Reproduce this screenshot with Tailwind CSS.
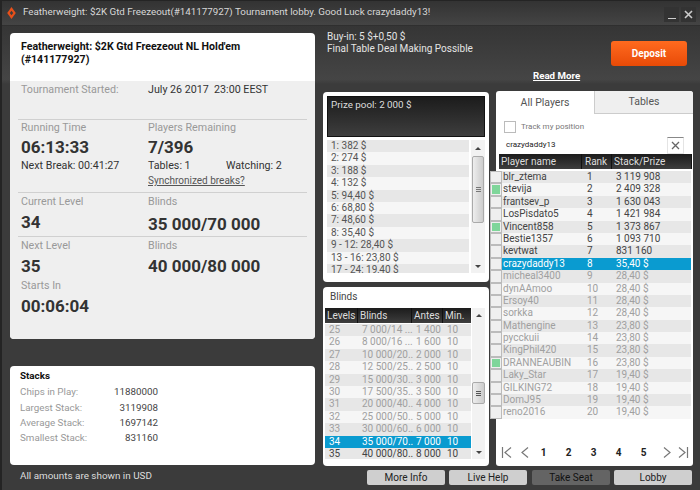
<!DOCTYPE html>
<html lang="en">
<head>
  <meta charset="UTF-8" />
  <title>Tournament lobby</title>
  <script src="https://cdn.jsdelivr.net/npm/@tailwindcss/browser@4"></script>
</head>
<body class="bg-[#3b3b3b] font-['Roboto',sans-serif] overflow-hidden">
<div class="w-[700px] h-[490px] relative border-t border-l-2 border-[#242424] bg-gradient-to-b from-[#353535] from-[5%] via-[#454545] via-[16%] to-[#3b3b3b] to-[17%] overflow-hidden">

  <!-- title bar -->
  <div class="h-[25px] flex items-center pl-[5px] pb-[2px] border-b border-[#2f2f2f] bg-gradient-to-b from-[#333] to-[#444]">
    <svg width="9" height="12" viewBox="0 0 10 14" class="mt-[2px]"><path d="M5 0 10 7 5 14 0 7Z" fill="#e8501a"/><path d="M5 4.500 7 7 5 9.500 3 7Z" fill="#3d3d3d"/></svg>
    <span class="ml-[7px] text-[9.8px] text-[#d8d8d8] whitespace-nowrap">Featherweight: $2K Gtd Freezeout(#141177927) Tournament lobby. Good Luck crazydaddy13!</span>
    <div class="ml-auto mr-[4px] mt-[4px] flex gap-[2px]">
      <div class="w-[15px] h-[15px] bg-[#333] flex items-end justify-center pb-[3px]"><div class="w-[8px] h-[1px] bg-[#ccc]"></div></div>
      <div class="w-[15px] h-[15px] bg-[#333] flex items-center justify-center">
        <svg width="9" height="9" viewBox="0 0 9 9"><path d="M1 1 8 8M8 1 1 8" stroke="#ccc" stroke-width="1.6"/></svg>
      </div>
    </div>
  </div>

  <div class="flex pl-[8px] pt-[7px] h-[464px]">
    <!-- left column -->
    <div class="w-[305px] mr-[8px] flex flex-col shrink-0">
      <div class="h-[306px] shrink-0 rounded-[4px] bg-white overflow-hidden">
        <div class="h-[48px] px-[11px] pt-[7px] text-[10.6px] leading-[13px] font-bold text-[#111]">
          Featherweight: $2K Gtd Freezeout NL Hold'em<br />(#141177927)
        </div>
        <div class="h-[258px] bg-[#efefef] px-[8px] text-[#333]">
          <div class="flex h-[39px] border-b border-[#d0d0d0] px-[3px] text-[10.7px] leading-[14px]">
            <div class="w-[127px] text-[#999] pt-[2px]">Tournament Started:</div>
            <div class="pt-[2px] whitespace-pre">July 26 2017  23:00 EEST</div>
          </div>
          <div class="flex h-[73px] border-b border-[#d0d0d0] px-[3px] pt-[1px]">
            <div class="w-[127px]">
              <div class="text-[10.7px] leading-[14px] text-[#999]">Running Time</div>
              <div class="text-[17px] leading-[24px] font-bold">06:13:33</div>
              <div class="text-[10.7px] leading-[13px]">Next Break: 00:41:27</div>
            </div>
            <div>
              <div class="text-[10.7px] leading-[14px] text-[#999]">Players Remaining</div>
              <div class="text-[17px] leading-[24px] font-bold">7/396</div>
              <div class="flex text-[10.7px] leading-[13px]"><span class="w-[78px]">Tables: 1</span><span>Watching: 2</span></div>
              <div class="text-[10px] leading-[13px] mt-[2px] underline text-[#555]">Synchronized breaks?</div>
            </div>
          </div>
          <div class="flex h-[44px] border-b border-[#d0d0d0] px-[3px] pt-[2px]">
            <div class="w-[127px]">
              <div class="text-[10.7px] leading-[14px] text-[#999]">Current Level</div>
              <div class="text-[17px] leading-[24px] font-bold mt-[1px]">34</div>
            </div>
            <div>
              <div class="text-[10.7px] leading-[14px] text-[#999]">Blinds</div>
              <div class="text-[17px] leading-[24px] font-bold mt-[3px]">35 000/70 000</div>
            </div>
          </div>
          <div class="flex px-[3px] pt-[2px]">
            <div class="w-[127px]">
              <div class="text-[10.7px] leading-[14px] text-[#999]">Next Level</div>
              <div class="text-[17px] leading-[26px] font-bold">35</div>
              <div class="text-[10.7px] leading-[14px] text-[#999]">Starts In</div>
              <div class="text-[17px] leading-[26px] font-bold">00:06:04</div>
            </div>
            <div>
              <div class="text-[10.7px] leading-[14px] text-[#999]">Blinds</div>
              <div class="text-[17px] leading-[26px] font-bold">40 000/80 000</div>
            </div>
          </div>
        </div>
      </div>

      <div class="mt-[27px] h-[99px] shrink-0 rounded-[4px] bg-white pl-[10px] pt-[3px] text-[9.8px]">
        <div class="font-bold text-[#111] leading-[14px]">Stacks</div>
        <div class="flex w-[138px] justify-between text-[#999] leading-[16px] mt-[1px]"><span>Chips in Play:</span><span class="text-[#444]">11880000</span></div>
        <div class="flex w-[138px] justify-between text-[#999] leading-[15px]"><span>Largest Stack:</span><span class="text-[#444]">3119908</span></div>
        <div class="flex w-[138px] justify-between text-[#999] leading-[15px]"><span>Average Stack:</span><span class="text-[#444]">1697142</span></div>
        <div class="flex w-[138px] justify-between text-[#999] leading-[16px]"><span>Smallest Stack:</span><span class="text-[#444]">831160</span></div>
      </div>
      <div class="mt-[4px] ml-[10px] text-[9.9px] leading-[14px] text-[#ddd]">All amounts are shown in USD</div>
    </div>

    <!-- right part -->
    <div class="w-[370px] shrink-0 flex flex-col">
      <div class="h-[58px] shrink-0 flex relative">
        <div class="pl-[4px] text-[10px] leading-[12px] text-[#e4e4e4] -mt-[2px]">
          <div>Buy-in: 5 $+0,50 $</div>
          <div>Final Table Deal Making Possible</div>
        </div>
        <div class="absolute left-[210px] top-[36px] text-[9.7px] font-bold text-white underline leading-[13px]">Read More</div>
        <div class="absolute left-[288px] top-[8px] w-[76px] h-[25px] rounded-[3px] bg-gradient-to-b from-[#ff6a1e] to-[#e84a06] text-white text-[10px] font-bold flex items-center justify-center">Deposit</div>
      </div>

      <div class="flex shrink-0">
        <div class="w-[166px] mr-[7px] pt-[1px] flex flex-col shrink-0">
          <!-- prize pool -->
          <div class="h-[190px] shrink-0 rounded-[4px] bg-white p-[4px]">
            <div class="h-[41px] border border-[#111] bg-gradient-to-b from-[#1c1c1c] to-[#3e3e3e] px-[3px] pt-[1px] text-[9.8px] leading-[14px] text-[#ddd]">Prize pool: 2 000 $</div>
            <div class="flex mt-[3px] h-[133px] overflow-hidden">
              <div id="prizes" class="w-[142px] overflow-hidden text-[10px] text-[#555]"></div>
              <div class="w-[14px] ml-[2px] bg-[#f2f2f2] relative flex flex-col items-center">
                <div class="w-0 h-0 border-x-[3px] border-x-transparent border-b-[3px] border-b-[#444] mt-[7px]"></div>
                <div class="absolute top-[16px] left-[1px] w-[12px] h-[67px] rounded-[2px] border border-[#aaa] bg-gradient-to-r from-[#eee] to-[#ccc] flex flex-col items-center justify-center gap-[1px]">
                  <div class="w-[5px] h-[1px] bg-[#777]"></div><div class="w-[5px] h-[1px] bg-[#777]"></div><div class="w-[5px] h-[1px] bg-[#777]"></div>
                </div>
                <div class="absolute bottom-[5px] w-0 h-0 border-x-[3px] border-x-transparent border-t-[3px] border-t-[#444]"></div>
              </div>
            </div>
          </div>
          <!-- blinds -->
          <div class="mt-[5px] h-[179px] shrink-0 rounded-[4px] bg-white pl-[2px] pr-[4px]">
            <div class="h-[21px] pl-[5px] pt-[3px] text-[10px] leading-[13px] text-[#444]">Blinds</div>
            <div class="flex h-[151px] overflow-hidden">
              <div class="w-[146px]">
                <div class="grid grid-cols-[33px_54px_31px_28px] h-[15px] mb-[1px] bg-gradient-to-b from-[#1c1c1c] to-[#3e3e3e] text-[10px] leading-[15px] text-[#ddd]">
                  <div class="pl-[2px] border-r border-[#111]">Levels</div>
                  <div class="pl-[2px] border-r border-[#111]">Blinds</div>
                  <div class="pl-[2px] border-r border-[#111]">Antes</div>
                  <div class="pl-[2px]">Min.</div>
                </div>
                <div id="blinds" class="text-[10px] h-[135px] overflow-hidden"></div>
              </div>
              <div class="w-[14px] ml-[1px] bg-[#f2f2f2] relative flex flex-col items-center">
                <div class="w-0 h-0 border-x-[3px] border-x-transparent border-b-[3px] border-b-[#444] mt-[6px]"></div>
                <div class="absolute top-[74px] left-[0px] w-[13px] h-[22px] rounded-[2px] border border-[#aaa] bg-gradient-to-r from-[#eee] to-[#ccc] flex flex-col items-center justify-center gap-[1px]">
                  <div class="w-[5px] h-[1px] bg-[#555]"></div><div class="w-[5px] h-[1px] bg-[#555]"></div><div class="w-[5px] h-[1px] bg-[#555]"></div>
                </div>
                <div class="absolute bottom-[5px] w-0 h-0 border-x-[3px] border-x-transparent border-t-[3px] border-t-[#444]"></div>
              </div>
            </div>
          </div>
        </div>

        <!-- players -->
        <div class="relative w-[197px] h-[375px] shrink-0 rounded-[3px] bg-white">
          <div class="flex h-[23px] text-[10.5px] text-[#555]">
            <div class="w-[98px] flex items-center justify-center">All Players</div>
            <div class="flex-1 flex items-center justify-center bg-[#efefef] border-l border-b border-[#ccc] rounded-tr-[3px]">Tables</div>
          </div>
          <div class="flex items-center pl-[8px] h-[18px] mt-[4px] text-[8px] text-[#777]">
            <div class="w-[12px] h-[12px] border border-[#bbb] mr-[5px]"></div>Track my position
          </div>
          <div class="flex items-center h-[17px] pl-[10px] pb-[2px] mr-[9px] mt-[1px] text-[8px] text-[#222] relative">
            crazydaddy13
            <div class="absolute right-0 top-0 w-[17px] h-[17px] border-t border-t-[#888] border-x border-b border-[#e4e4e4] flex items-center justify-center">
              <svg width="9" height="9" viewBox="0 0 9 9"><path d="M1 1 8 8M8 1 1 8" stroke="#666" stroke-width="1.3"/></svg>
            </div>
          </div>
          <div class="grid grid-cols-[83px_30px_1fr] h-[15px] ml-[3px] mr-[1px] border-r border-[#111] bg-gradient-to-b from-[#1c1c1c] to-[#3e3e3e] text-[10px] leading-[15px] text-[#ddd]">
            <div class="pl-[2px] border-r border-[#111]">Player name</div>
            <div class="pl-[3px] border-r border-[#111]">Rank</div>
            <div class="pl-[2px]">Stack/Prize</div>
          </div>
          <div id="players" class="ml-[-6px] mr-[2px] mt-[2px] text-[10px]"></div>
          <div class="absolute bottom-[6px] left-[5px] flex items-center text-[10px] font-bold text-[#222]">
            <svg width="12" height="11" viewBox="0 0 12 11"><path d="M1.500 0V11M10 .5 4 5.500 10 10.500" fill="none" stroke="#777" stroke-width="1.2"/></svg>
            <svg width="8" height="11" viewBox="0 0 8 11" class="ml-[8px] mr-[2px]"><path d="M7 .5 1 5.500 7 10.500" fill="none" stroke="#777" stroke-width="1.2"/></svg>
            <span class="w-[25px] text-center">1</span><span class="w-[25px] text-center">2</span><span class="w-[25px] text-center">3</span><span class="w-[25px] text-center">4</span><span class="w-[25px] text-center">5</span>
            <svg width="8" height="11" viewBox="0 0 8 11" class="ml-[7px]"><path d="M1 .5 7 5.500 1 10.500" fill="none" stroke="#777" stroke-width="1.2"/></svg>
            <svg width="12" height="11" viewBox="0 0 12 11" class="ml-[6px]"><path d="M10.500 0V11M2 .5 8 5.500 2 10.500" fill="none" stroke="#777" stroke-width="1.2"/></svg>
          </div>
        </div>
      </div>

      <!-- bottom buttons -->
      <div class="flex ml-[44px] mt-[4px] gap-[4px] text-[10px] shrink-0">
        <div class="w-[78px] h-[15px] rounded-[2px] bg-[#cfcfcf] text-[#222] flex items-center justify-center">More Info</div>
        <div class="w-[78px] h-[15px] rounded-[2px] bg-[#cfcfcf] text-[#222] flex items-center justify-center">Live Help</div>
        <div class="w-[78px] h-[15px] ml-[1px] rounded-[2px] bg-[#646464] text-[#111] flex items-center justify-center">Take Seat</div>
        <div class="w-[78px] h-[15px] rounded-[2px] bg-[#cfcfcf] text-[#222] flex items-center justify-center">Lobby</div>
      </div>
    </div>
  </div>
</div>

<script>
  const prizes = ['1: 382 $','2: 274 $','3: 188 $','4: 132 $','5: 94,40 $','6: 68,80 $','7: 48,60 $','8: 35,40 $','9 - 12: 28,40 $','13 - 16: 23,80 $','17 - 24: 19,40 $'];
  document.getElementById('prizes').innerHTML = prizes.map((p, i) =>
    `<div class="h-[12.4px] leading-[12.4px] pl-[4px] ${i % 2 ? 'bg-[#f6f6f6]' : 'bg-[#e7e7e7]'}">${p}</div>`).join('');

  const blinds = [
    ['25','7 000/14 ...','1 400'],['26','8 000/16 ...','1 600'],['27','10 000/20..','2 000'],
    ['28','12 500/25..','2 500'],['29','15 000/30..','3 000'],['30','17 500/35..','3 500'],
    ['31','20 000/40..','4 000'],['32','25 000/50..','5 000'],['33','30 000/60..','6 000'],
    ['34','35 000/70..','7 000'],['35','40 000/80..','8 000']
  ];
  document.getElementById('blinds').innerHTML = blinds.map((b, i) => {
    let rowClass = i % 2 ? 'bg-[#f6f6f6] text-[#a0a0a0]' : 'bg-[#e7e7e7] text-[#a0a0a0]';
    if (b[0] === '34') rowClass = 'bg-[#0a9bd0] text-white';
    if (b[0] === '35') rowClass = 'bg-[#e7e7e7] text-[#444]';
    return `<div class="grid grid-cols-[33px_54px_31px_24px] h-[12.4px] leading-[12.4px] pl-[4px] whitespace-nowrap overflow-hidden ${rowClass}"><div>${b[0]}</div><div>${b[1]}</div><div>${b[2]}</div><div>10</div></div>`;
  }).join('');

  const players = [
    ['blr_ztema','3 119 908'],['stevija','2 409 328',1],['frantsev_p','1 630 043'],['LosPisdato5','1 421 984'],
    ['Vincent858','1 373 867',1],['Bestie1357','1 093 710'],['kevtwat','831 160'],['crazydaddy13','35,40 $'],
    ['micheal3400','28,40 $'],['dynAAmoo','28,40 $'],['Ersoy40','28,40 $'],['sorkka','28,40 $'],
    ['Mathengine','23,80 $'],['pycckuii','23,80 $'],['KingPhil420','23,80 $'],['DRANNEAUBIN','23,80 $',1],
    ['Laky_Star','19,40 $'],['GILKING72','19,40 $'],['DomJ95','19,40 $'],['reno2016','19,40 $']
  ];
  document.getElementById('players').innerHTML = players.map((p, i) => {
    let rowClass = i % 2 ? 'bg-[#f6f6f6]' : 'bg-[#e7e7e7]';
    if (i === 7) rowClass = 'bg-[#0a9bd0] text-white';
    else if (i > 7) rowClass += ' text-[#a0a0a0]';
    else rowClass += ' text-[#444]';
    const box = p[2]
      ? '<div class="w-[12px] h-[12.4px] bg-[#efefef] border border-[#bbb] p-[1px]"><div class="w-full h-full bg-[#7fd69a]"></div></div>'
      : '<div class="w-[12px] h-[12.4px] bg-[#efefef] border border-[#bbb]"></div>';
    return `<div class="flex h-[12.4px] leading-[12.4px] whitespace-nowrap">${box}<div class="flex-1 grid grid-cols-[84px_30px_1fr] ${rowClass}"><div class="pl-[1px]">${p[0]}</div><div class="pl-[1px]">${i + 1}</div><div>${p[1]}</div></div></div>`;
  }).join('');
</script>
</body>
</html>
